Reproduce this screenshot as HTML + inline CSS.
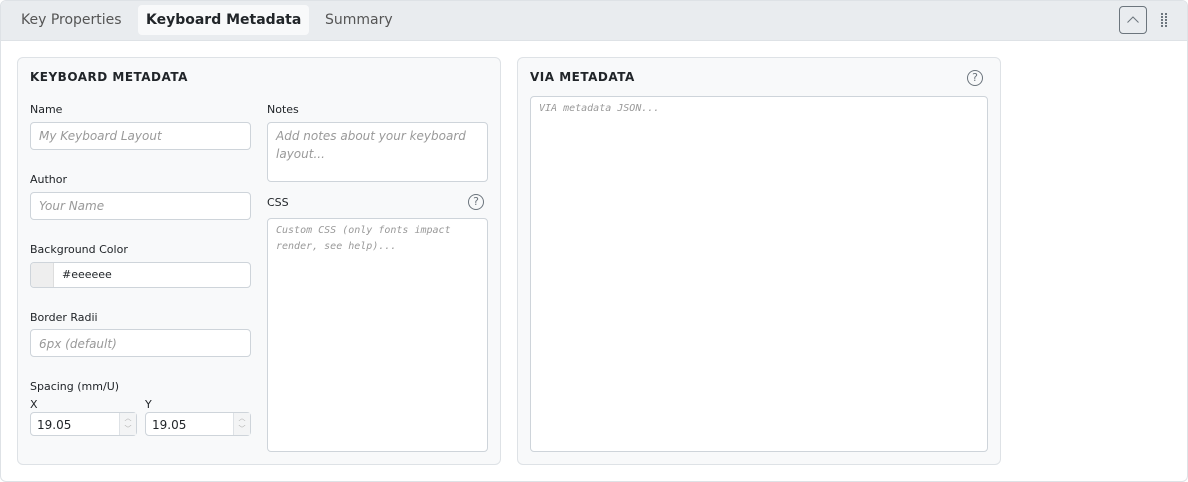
<!DOCTYPE html>
<html><head><meta charset="utf-8"><style>
*{box-sizing:border-box;margin:0;padding:0}
body{width:1188px;height:482px;background:#fff;font-family:"DejaVu Sans","Liberation Sans",sans-serif;color:#212529;position:relative;overflow:hidden}
.a{position:absolute}
.outer{left:0;top:0;width:1188px;height:482px;border:1px solid #dee2e6;border-radius:6px}
.hdr{left:1px;top:1px;width:1186px;height:40px;background:#e9ecef;border-bottom:1px solid #dee2e6;border-radius:5px 5px 0 0}
.tab{font-size:14px;color:#555;top:12px}
.card{background:#f8f9fa;border:1px solid #dee2e6;border-radius:6px}
.title{font-size:12px;font-weight:bold;letter-spacing:0.5px;color:#212529}
.lbl{font-size:11px;color:#212529}
.in{background:#fff;border:1px solid #ced4da;border-radius:4px;font-size:12px;color:#999;font-style:italic;padding:6px 8px}
.mono{font-family:"DejaVu Sans Mono","Liberation Mono",monospace;font-size:10px;color:#999;font-style:italic;line-height:16px;padding:4px 8px}
.help{width:16px;height:16px;border:1px solid #6c757d;border-radius:50%;font-size:11px;color:#6c757d;text-align:center;line-height:14px}
.num{background:#fff;border:1px solid #ced4da;border-radius:4px;font-size:12px;padding:4px 6px;height:24px}
.sp{position:absolute;right:0;top:0;width:17px;height:22px;border-left:1px solid #dee2e6;background:#f3f4f5;font-size:7px;color:#aaa;text-align:center;line-height:11px}
</style></head><body>
<div class="a outer"></div>
<div class="a hdr"></div>
<div class="a tab" style="left:21px">Key Properties</div>
<div class="a" style="left:138px;top:5px;width:171px;height:30px;background:#f8f9fa;border-radius:4px"></div>
<div class="a tab" style="left:146px;color:#212529;font-weight:bold">Keyboard Metadata</div>
<div class="a tab" style="left:325px">Summary</div>
<div class="a" style="left:1119px;top:6px;width:28px;height:28px;border:1px solid #6c757d;border-radius:4px"><svg width="26" height="26" style="position:absolute;left:0;top:0"><path d="M7.5 15.5 L13 10 L18.5 15.5" fill="none" stroke="#6c757d" stroke-width="1"/></svg></div>
<svg class="a" style="left:1160px;top:12px" width="10" height="16"><g fill="#6c757d"><rect x="1" y="1" width="2" height="2"/><rect x="5" y="1" width="2" height="2"/><rect x="1" y="4" width="2" height="2"/><rect x="5" y="4" width="2" height="2"/><rect x="1" y="7" width="2" height="2"/><rect x="5" y="7" width="2" height="2"/><rect x="1" y="10" width="2" height="2"/><rect x="5" y="10" width="2" height="2"/><rect x="1" y="13" width="2" height="2"/><rect x="5" y="13" width="2" height="2"/></g></svg>

<div class="a card" style="left:17px;top:57px;width:484px;height:408px"></div>
<div class="a title" style="left:30px;top:70px">KEYBOARD METADATA</div>
<div class="a lbl" style="left:30px;top:103px">Name</div>
<div class="a in" style="left:30px;top:122px;width:221px;height:28px">My Keyboard Layout</div>
<div class="a lbl" style="left:30px;top:173px">Author</div>
<div class="a in" style="left:30px;top:192px;width:221px;height:28px">Your Name</div>
<div class="a lbl" style="left:30px;top:243px">Background Color</div>
<div class="a" style="left:30px;top:262px;width:221px;height:26px;background:#fff;border:1px solid #ced4da;border-radius:4px;overflow:hidden"><div style="position:absolute;left:0;top:0;width:23px;height:24px;background:#eee;border-right:1px solid #ddd"></div><div style="position:absolute;left:31px;top:5px;font-size:11px">#eeeeee</div></div>
<div class="a lbl" style="left:30px;top:311px">Border Radii</div>
<div class="a in" style="left:30px;top:329px;width:221px;height:28px;padding-top:7px">6px (default)</div>
<div class="a lbl" style="left:30px;top:380px">Spacing (mm/U)</div>
<div class="a lbl" style="left:30px;top:398px">X</div>
<div class="a lbl" style="left:145px;top:398px">Y</div>
<div class="a num" style="left:30px;top:412px;width:107px;padding-top:5px">19.05<div class="sp">︿<br>﹀</div></div>
<div class="a num" style="left:145px;top:412px;width:106px;padding-top:5px">19.05<div class="sp">︿<br>﹀</div></div>
<div class="a lbl" style="left:267px;top:103px">Notes</div>
<div class="a in" style="left:267px;top:122px;width:221px;height:60px;line-height:18px;padding:4px 8px">Add notes about your keyboard layout...</div>
<div class="a lbl" style="left:267px;top:196px">CSS</div>
<div class="a help" style="left:468px;top:194px">?</div>
<div class="a in mono" style="left:267px;top:218px;width:221px;height:234px">Custom CSS (only fonts impact render, see help)...</div>

<div class="a card" style="left:517px;top:57px;width:484px;height:408px"></div>
<div class="a title" style="left:530px;top:70px">VIA METADATA</div>
<div class="a help" style="left:967px;top:70px">?</div>
<div class="a in mono" style="left:530px;top:96px;width:458px;height:356px">VIA metadata JSON...</div>
</body></html>
